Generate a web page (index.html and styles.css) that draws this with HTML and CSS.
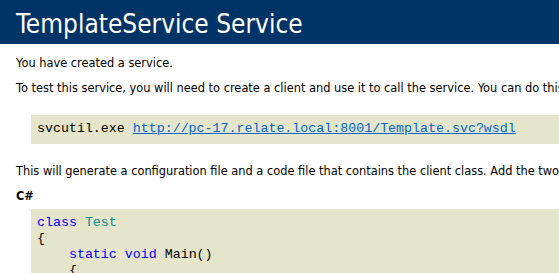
FILE: index.html
```html
<!DOCTYPE html>
<html lang="en">
<head>
  <meta charset="UTF-8" />
  <title>TemplateService Service</title>
  <link rel="stylesheet" href="styles.css">
</head>
<body>
  <div id="content">
    <p class="heading1">TemplateService Service</p>
    <p>You have created a service.</p>
    <p class="lead">To test this service, you will need to create a client and use it to call the service. You can do this using the svcutil.exe tool from the command line with the following syntax:</p>
    <pre>svcutil.exe <a href="#">http://pc-17.relate.local:8001/Template.svc?wsdl</a></pre>
    <p>This will generate a configuration file and a code file that contains the client class. Add the two files to your client application and use the generated client class to call the Service. For example:</p>
    <p class="intro"><b>C#</b></p>
    <pre><span class="kw">class</span> <span class="tp">Test</span>
{
    <span class="kw">static</span> <span class="kw">void</span> Main()
    {
        TemplateClient client = new TemplateClient();
    }
}</pre>
  </div>
</body>
</html>
```

FILE: styles.css
```css
body {
  margin: 0;
  color: #000;
  background: #fff;
  font-family: "DejaVu Sans", Verdana, sans-serif;
}

#content {
  margin-left: 16px;
  font-size: 11.4px;
}

p {
  margin: 0 0 11px;
  white-space: nowrap;
  line-height: 14px;
}

.heading1 {
  margin: 0 0 12px -16px;
  padding: 9px 0 0 16px;
  height: 35px;
  background-color: #003366;
  color: #fff;
  font-family: "DejaVu Sans Condensed", Tahoma, sans-serif;
  font-size: 26px;
  line-height: 30px;
}

p.lead {
  margin-bottom: 20px;
}

p.intro {
  margin-bottom: 6px;
}

pre {
  margin: 0 0 20px 15px;
  padding: 6px 6px 7px;
  background-color: #e5e5cc;
  font-family: "Liberation Mono", "Courier New", monospace;
  font-size: 13.3px;
  line-height: 16px;
  white-space: pre;
}

pre a {
  color: #0066cc;
}

.kw {
  color: #0000ff;
}

.tp {
  color: #008b8b;
}
```
